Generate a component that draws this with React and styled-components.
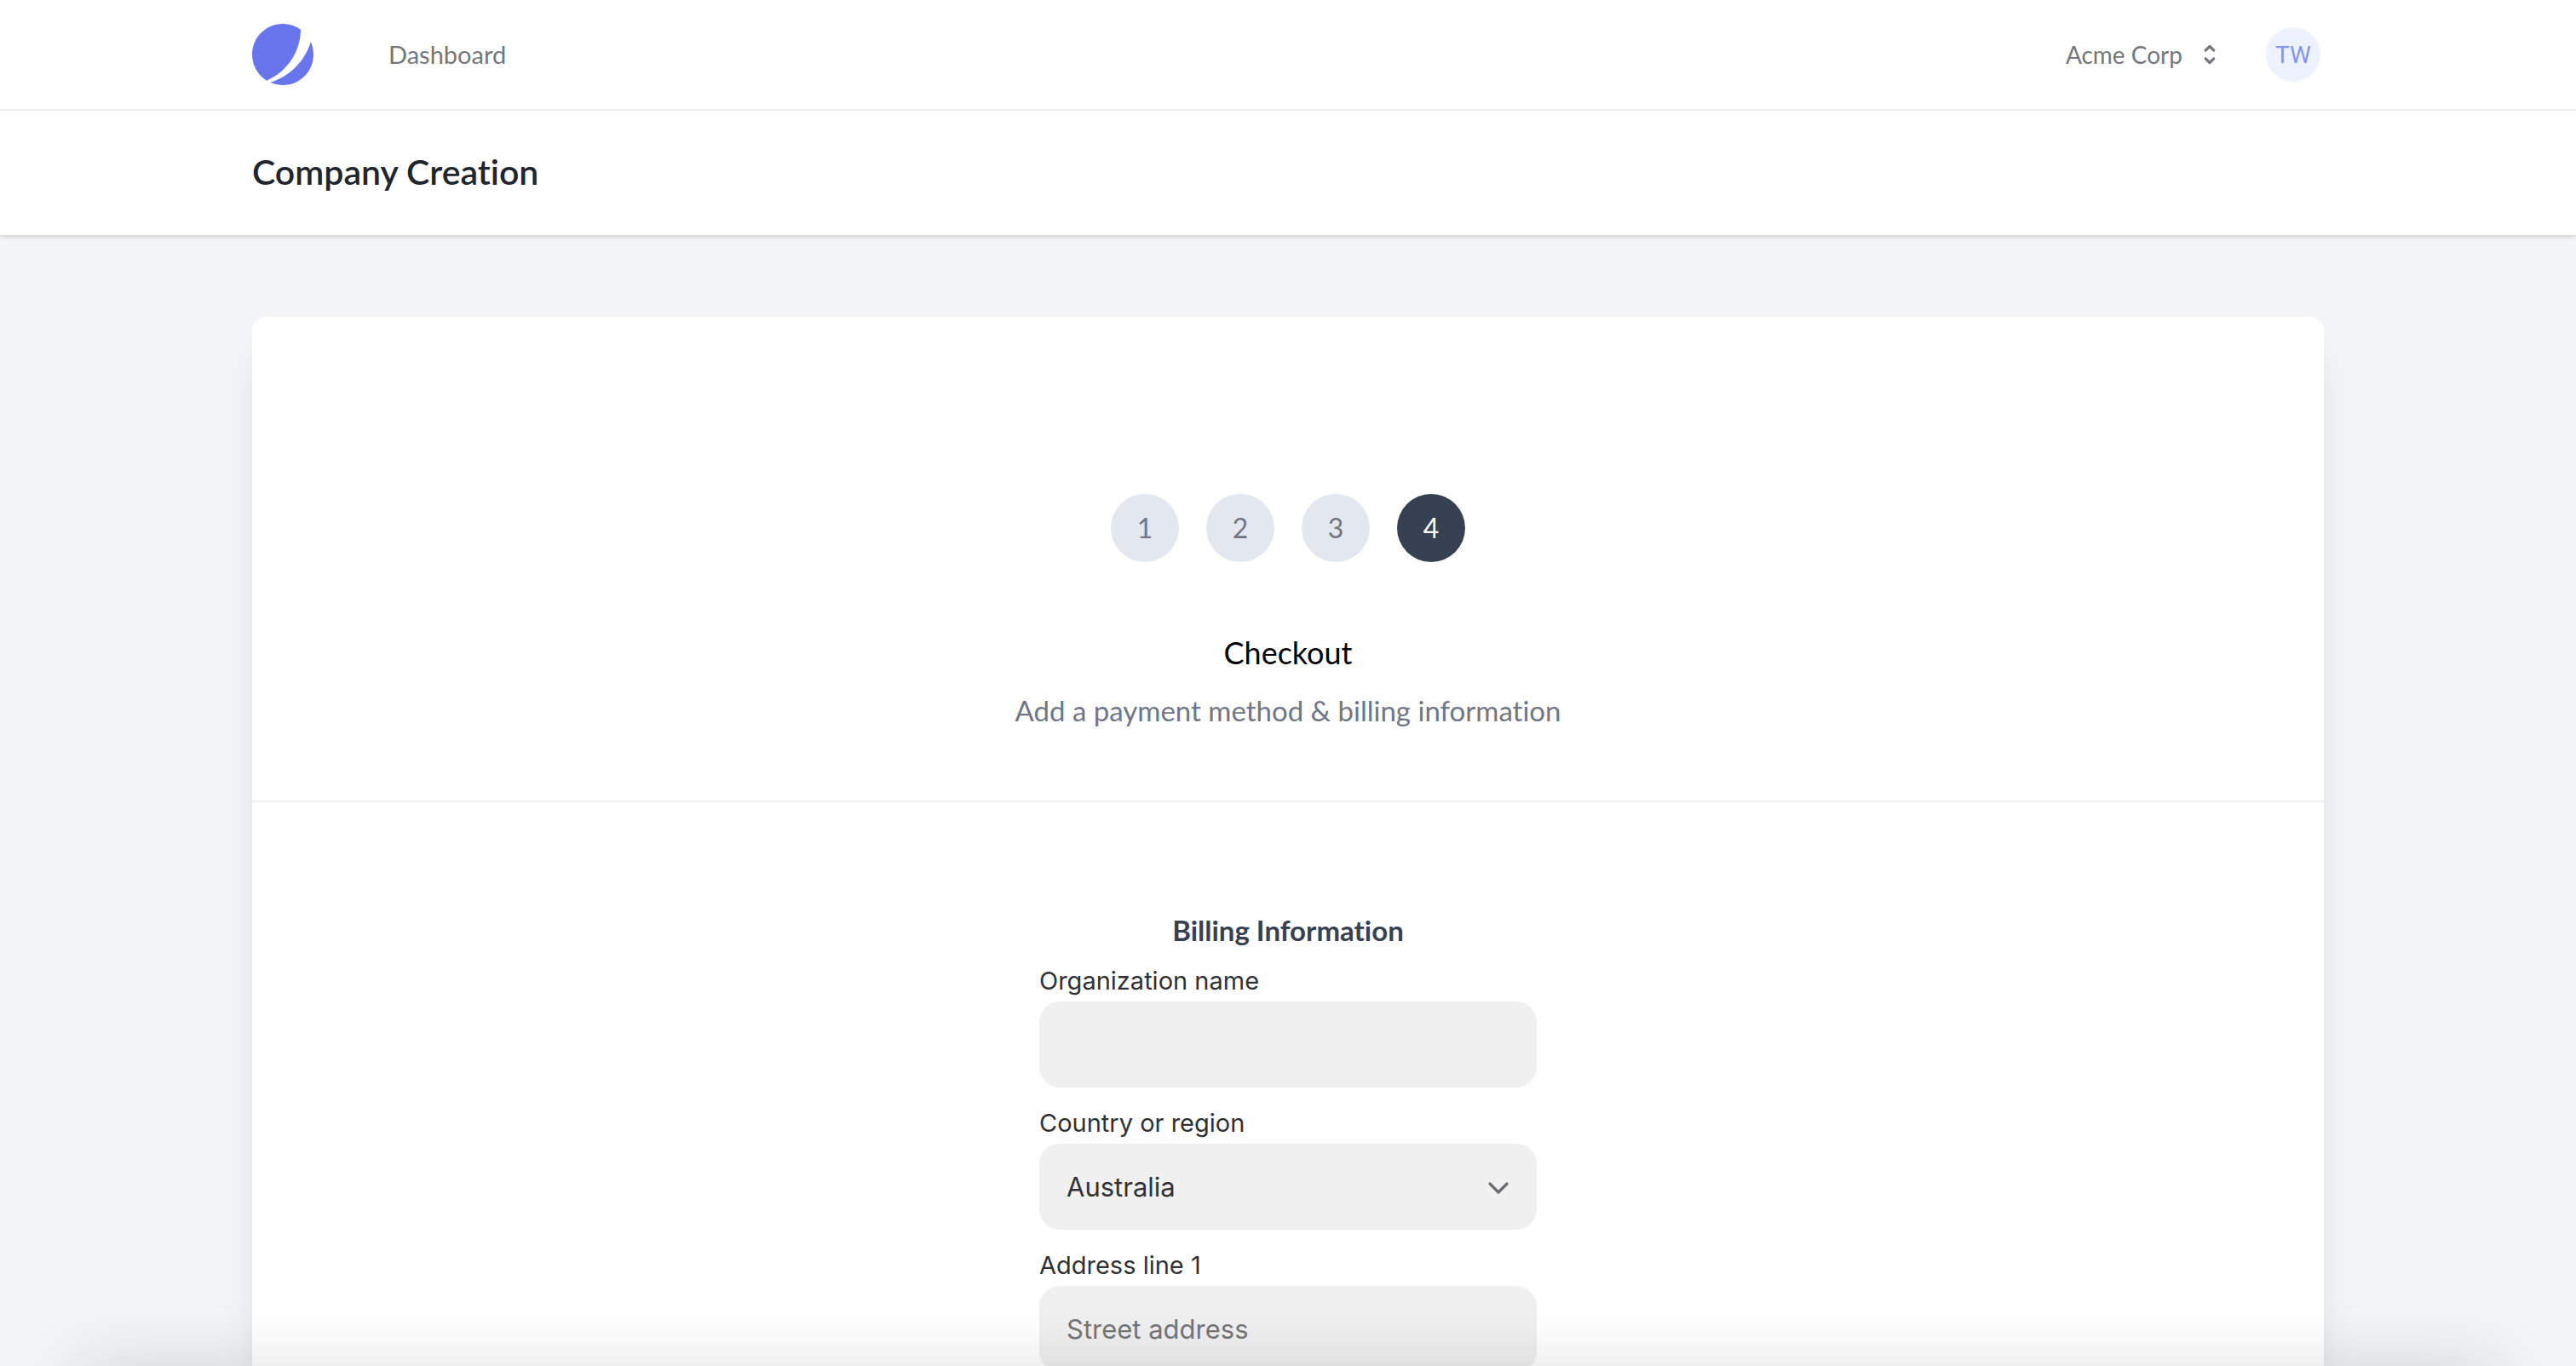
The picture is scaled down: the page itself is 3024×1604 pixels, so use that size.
import React from "react";
import styled, { createGlobalStyle } from "styled-components";

const brandFont = '"Lato", "Open Sans", sans-serif';
const formFont = '"Inter", "Liberation Sans", sans-serif';

const GlobalStyle = createGlobalStyle`
  *, *::before, *::after { box-sizing: border-box; }
  body { margin: 0; background: #f3f4f6; }
  h1, h2, h3, p, ol { margin: 0; padding: 0; }
  button, input, select { font: inherit; }
`;

const Page = styled.div`
  height: 100vh;
  overflow-y: auto;
  scrollbar-width: none;
  background: #f3f4f6;
  font-family: ${brandFont};
  font-variant-ligatures: none;
`;

const Container = styled.div`
  max-width: 2560px;
  margin: 0 auto;
  padding: 0 64px;
`;

const TopNav = styled.nav`
  background: #fff;
  border-bottom: 2px solid #f1f2f4;
`;

const NavRow = styled(Container)`
  display: flex;
  align-items: center;
  justify-content: space-between;
  height: 128px;
`;

const NavGroup = styled.div`
  display: flex;
  align-items: center;
  gap: ${({ $gap }) => $gap}px;
`;

const LogoLink = styled.a`
  display: block;
  svg { display: block; width: 72px; height: 72px; }
`;

const NavLink = styled.a`
  color: #74777b;
  font-size: 29px;
  line-height: 40px;
  text-decoration: none;
`;

const TeamButton = styled.button`
  display: flex;
  align-items: center;
  gap: 16px;
  padding: 0;
  border: 0;
  background: transparent;
  color: #74777b;
  font-size: 28px;
  line-height: 40px;
  cursor: pointer;
  svg { width: 32px; height: 32px; }
`;

const Avatar = styled.button`
  width: 64px;
  height: 64px;
  margin-right: 4px;
  padding: 0;
  border: 0;
  border-radius: 50%;
  background: #edf2fe;
  color: #8595e9;
  font-family: "Roboto", "Liberation Sans", sans-serif;
  font-size: 28px;
  cursor: pointer;
`;

const PageHeader = styled.header`
  position: relative;
  background: #fff;
  box-shadow: 0 2px 6px rgba(0, 0, 0, 0.1), 0 2px 4px rgba(0, 0, 0, 0.06);
`;

const PageTitle = styled.h1`
  padding: 48px 0 50px;
  color: #1f2630;
  font-size: 41px;
  font-weight: 600;
  line-height: 48px;
`;

const Main = styled.main`
  padding: 96px 0;
`;

const Card = styled.section`
  background: #fff;
  border-radius: 16px;
  box-shadow: 0 40px 50px -10px rgba(0, 0, 0, 0.1),
    0 20px 20px -10px rgba(0, 0, 0, 0.04);
`;

const Intro = styled.div`
  display: flex;
  flex-direction: column;
  align-items: center;
  padding: 208px 64px 82px;
  border-bottom: 2px solid #eff0f2;
`;

const Steps = styled.ol`
  display: flex;
  gap: 32px;
  list-style: none;
`;

const Step = styled.li`
  display: flex;
  align-items: center;
  justify-content: center;
  width: 80px;
  height: 80px;
  padding-bottom: 2px;
  border-radius: 50%;
  background: ${({ $active }) => ($active ? "#374151" : "#e3e8f0")};
  color: ${({ $active }) => ($active ? "#fff" : "#717680")};
  font-size: 32px;
`;

const StepTitle = styled.h2`
  margin-top: 78px;
  color: #000;
  font-size: 36px;
  font-weight: 400;
  line-height: 56px;
`;

const StepText = styled.p`
  margin-top: 16px;
  color: #6f7686;
  font-size: 33px;
  line-height: 48px;
`;

const BillingForm = styled.form`
  display: flex;
  flex-direction: column;
  width: 584px;
  max-width: 100%;
  margin: 0 auto;
  padding: 126px 0 96px;
`;

const FormTitle = styled.h3`
  margin-bottom: 16px;
  color: #374151;
  font-size: 33px;
  font-weight: 700;
  line-height: 48px;
  text-align: center;
`;

const Field = styled.div`
  display: flex;
  flex-direction: column;
  margin-bottom: 22px;
  font-family: ${formFont};
`;

const Label = styled.label`
  padding-bottom: 4px;
  color: #303135;
  font-size: 29px;
  line-height: 40px;
`;

const control = `
  width: 100%;
  height: 101px;
  padding: 0 32px;
  border: 0;
  border-radius: 24px;
  background: #f0f0f0;
  color: #303135;
  font-size: 31px;
`;

const TextInput = styled.input`
  ${control}
  &::placeholder { color: #757678; opacity: 1; }
`;

const SelectWrap = styled.div`
  display: grid;
  align-items: center;
  > * { grid-area: 1 / 1; }
  svg {
    justify-self: end;
    width: 28px;
    height: 28px;
    margin-right: 31px;
    pointer-events: none;
  }
`;

const Select = styled.select`
  ${control}
  appearance: none;
`;

const BottomShade = styled.div`
  position: fixed;
  right: 90px;
  bottom: -80px;
  left: 90px;
  height: 80px;
  box-shadow: 0 0 80px rgba(0, 0, 0, 0.13);
  pointer-events: none;
`;

const Logo = () => (
  <svg viewBox="0 0 48 48" fill="#6875ec" aria-hidden="true">
    <path d="M11.395 44.428C4.557 40.198 0 32.632 0 24 0 10.745 10.745 0 24 0a23.891 23.891 0 0113.997 4.502c-.2 17.907-11.097 33.245-26.602 39.926z" />
    <path d="M14.134 45.885A23.914 23.914 0 0024 48c13.255 0 24-10.745 24-24 0-3.516-.756-6.856-2.115-9.866-4.659 15.143-16.608 27.092-31.75 31.751z" />
  </svg>
);

const Selector = () => (
  <svg viewBox="0 0 20 20" fill="currentColor" aria-hidden="true">
    <path d="M10 3a1 1 0 01.707.293l3 3a1 1 0 01-1.414 1.414L10 5.414 7.707 7.707a1 1 0 01-1.414-1.414l3-3A1 1 0 0110 3zm-3.707 9.293a1 1 0 011.414 0L10 14.586l2.293-2.293a1 1 0 011.414 1.414l-3 3a1 1 0 01-1.414 0l-3-3a1 1 0 010-1.414z" />
  </svg>
);

const Chevron = () => (
  <svg viewBox="0 0 28 28" fill="none" aria-hidden="true">
    <path d="M4 10L14 20L24 10" stroke="#6b6c6f" strokeWidth="3.2" strokeLinecap="round" strokeLinejoin="round" />
  </svg>
);

const steps = [1, 2, 3, 4];
const currentStep = 4;

export default function App() {
  return (
    <Page>
      <GlobalStyle />
      <TopNav>
        <NavRow>
          <NavGroup $gap={88}>
            <LogoLink href="#" aria-label="Home"><Logo /></LogoLink>
            <NavLink href="#">Dashboard</NavLink>
          </NavGroup>
          <NavGroup $gap={50}>
            <TeamButton type="button">Acme Corp<Selector /></TeamButton>
            <Avatar type="button">TW</Avatar>
          </NavGroup>
        </NavRow>
      </TopNav>
      <PageHeader>
        <Container>
          <PageTitle>Company Creation</PageTitle>
        </Container>
      </PageHeader>
      <Main>
        <Container>
          <Card>
            <Intro>
              <Steps>
                {steps.map((n) => (
                  <Step key={n} $active={n === currentStep} aria-current={n === currentStep ? "step" : undefined}>{n}</Step>
                ))}
              </Steps>
              <StepTitle>Checkout</StepTitle>
              <StepText>Add a payment method &amp; billing information</StepText>
            </Intro>
            <BillingForm>
              <FormTitle>Billing Information</FormTitle>
              <Field>
                <Label htmlFor="organization">Organization name</Label>
                <TextInput id="organization" type="text" />
              </Field>
              <Field>
                <Label htmlFor="country">Country or region</Label>
                <SelectWrap>
                  <Select id="country" defaultValue="Australia">
                    <option>Australia</option>
                  </Select>
                  <Chevron />
                </SelectWrap>
              </Field>
              <Field>
                <Label htmlFor="address">Address line 1</Label>
                <TextInput id="address" type="text" placeholder="Street address" />
              </Field>
            </BillingForm>
          </Card>
        </Container>
      </Main>
      <BottomShade />
    </Page>
  );
}
